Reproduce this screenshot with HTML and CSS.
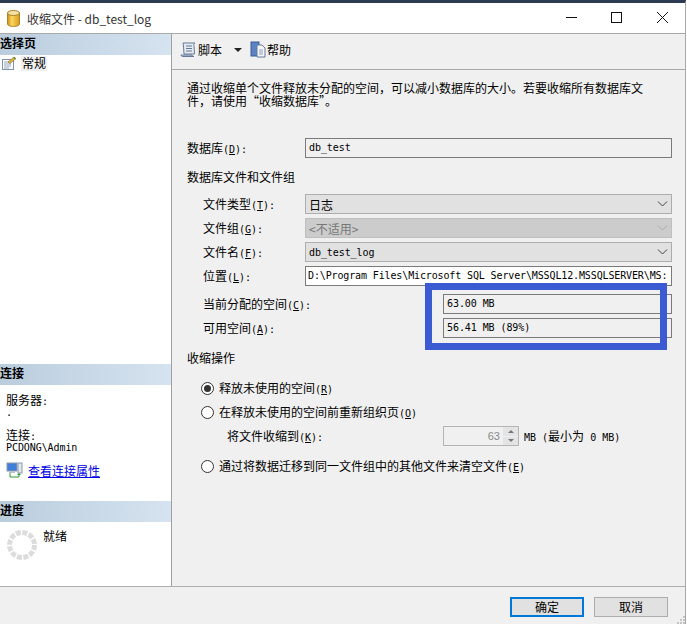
FILE: index.html
```html
<!DOCTYPE html>
<html lang="zh">
<head>
<meta charset="utf-8">
<title>收缩文件 - db_test_log</title>
<link rel="stylesheet" href="styles.css">
</head>
<body>
<div class="window">
  <header class="titlebar">
    <svg class="title-icon" width="13" height="17" viewBox="0 0 13 17"><defs><linearGradient id="cyl" x1="0" x2="1" y1="0" y2="0"><stop offset="0" stop-color="#c98f14"/><stop offset=".35" stop-color="#fbd75e"/><stop offset="1" stop-color="#d99c1c"/></linearGradient></defs><path d="M.5 3v11c0 1.4 2.7 2.5 6 2.5s6-1.100 6-2.500V3z" fill="url(#cyl)" stroke="#a9822b"/><ellipse cx="6.500" cy="3" rx="6" ry="2.500" fill="#f3e2a6" stroke="#a9822b"/></svg>
    <span class="title-text">收缩文件 - db_test_log</span>
    <div class="controls">
      <svg width="46" height="30" viewBox="0 0 46 30"><path d="M19 14.500h11" stroke="#111" fill="none"/></svg>
      <svg width="46" height="30" viewBox="0 0 46 30"><rect x="18.500" y="9.500" width="10" height="10" stroke="#111" fill="none"/></svg>
      <svg width="46" height="30" viewBox="0 0 46 30"><path d="M18 9l11 11M29 9L18 20" stroke="#111" fill="none"/></svg>
    </div>
  </header>

  <div class="main">
    <aside class="side">
      <section class="side-sec sec-pages">
        <h2 class="side-head">选择页</h2>
        <div class="page-item">
          <svg width="16" height="16" viewBox="0 0 16 16"><rect x="1.500" y="4.500" width="11" height="10" fill="#fff" stroke="#7f95ad"/><path d="M3 7h7M3 9h7M3 11h7M3 13h5" stroke="#8fa6bd"/><path d="M7 7l6-5 2 1.500-6 5z" fill="#e8b93a" stroke="#7d6a22" stroke-width=".6"/><path d="M13 2l2 1.500-1 .9-2-1.500z" fill="#5f9b3c"/></svg>
          <span class="page-name">常规</span>
        </div>
      </section>
      <section class="side-sec sec-conn">
        <h2 class="side-head">连接</h2>
        <div class="conn-body">
          <div class="conn-line">服务器<span class="k">:</span></div>
          <div class="conn-line mono">.</div>
          <div class="conn-line conn-gap">连接<span class="k">:</span></div>
          <div class="conn-line mono">PCDONG\Admin</div>
          <div class="conn-link">
            <svg width="17" height="16" viewBox="0 0 17 16"><rect x="1" y="1" width="10" height="8" fill="#3f7fd8" stroke="#8c9aae"/><rect x="3" y="9" width="6" height="2" fill="#b9c3cf"/><rect x="12" y="1" width="4" height="10" fill="#e2e7ee" stroke="#8c9aae"/><path d="M4 11v4h9v-3" stroke="#2f9a35" fill="none"/><path d="M11 13l2-2 2 2" fill="#2f9a35"/></svg>
            <a class="link" href="#">查看连接属性</a>
          </div>
        </div>
      </section>
      <section class="side-sec sec-prog">
        <h2 class="side-head">进度</h2>
        <div class="prog-body">
          <svg width="30" height="30" viewBox="0 0 30 30"><circle cx="15" cy="15" r="12.500" fill="none" stroke="#dcdcdc" stroke-width="5" stroke-dasharray="5 1.540"/></svg>
          <span class="prog-text">就绪</span>
        </div>
      </section>
    </aside>

    <div class="content">
      <div class="toolbar">
        <svg width="17" height="17" viewBox="0 0 17 17"><path d="M3 2h12c-1.500 1-1.500 2-1 3l.5 8H4L3.500 5C3.500 4 3 3 3 2z" fill="#e7ebf0" stroke="#63789a"/><path d="M1 14h11c.5 1 1 1.500 2 1.500H3C2 15.500 1 15 1 14z" fill="#c4cfdc" stroke="#63789a"/><path d="M6 5h6M6 7.500h6M6 10h6" stroke="#63789a"/></svg>
        <span class="tool-label">脚本</span>
        <span class="caret"></span>
        <svg class="help-icon" width="16" height="17" viewBox="0 0 16 17"><rect x="1" y="1" width="8" height="14" fill="#5d83c2" stroke="#3c5a94"/><path d="M7 4h5l3 3v9H7z" fill="#f4f6fa" stroke="#63789a"/><path d="M9 9h4M9 11h4M9 13h4" stroke="#8fa0b8"/></svg>
        <span class="tool-label">帮助</span>
      </div>

      <div class="form">
        <p class="intro">通过收缩单个文件释放未分配的空间，可以减小数据库的大小。若要收缩所有数据库文件，请使用“收缩数据库”。</p>

        <div class="row row-db">
          <span class="label">数据库<span class="k">(<u>D</u>):</span></span>
          <div class="field mono">db_test</div>
        </div>

        <div class="row row-heading">数据库文件和文件组</div>

        <div class="indent">
          <div class="row">
            <span class="label-in">文件类型<span class="k">(<u>T</u>):</span></span>
            <div class="combo"><span>日志</span><svg width="11" height="6" viewBox="0 0 11 6"><path d="M1 .5l4.500 4.500L10 .5" fill="none" stroke="#444"/></svg></div>
          </div>
          <div class="row">
            <span class="label-in">文件组<span class="k">(<u>G</u>):</span></span>
            <div class="combo combo-off"><span>&lt;不适用&gt;</span><svg width="11" height="6" viewBox="0 0 11 6"><path d="M1 .5l4.500 4.500L10 .5" fill="none" stroke="#aaa"/></svg></div>
          </div>
          <div class="row">
            <span class="label-in">文件名<span class="k">(<u>F</u>):</span></span>
            <div class="combo"><span class="mono">db_test_log</span><svg width="11" height="6" viewBox="0 0 11 6"><path d="M1 .5l4.500 4.500L10 .5" fill="none" stroke="#444"/></svg></div>
          </div>
          <div class="row">
            <span class="label-in">位置<span class="k">(<u>L</u>):</span></span>
            <div class="field field-path mono">D:\Program Files\Microsoft SQL Server\MSSQL12.MSSQLSERVER\MS:</div>
          </div>
          <div class="row row-space">
            <span class="label-wide">当前分配的空间<span class="k">(<u>C</u>):</span></span>
            <div class="field field-short mono">63.00 MB</div>
          </div>
          <div class="row">
            <span class="label-wide">可用空间<span class="k">(<u>A</u>):</span></span>
            <div class="field field-short mono">56.41 MB (89%)</div>
          </div>
        </div>

        <div class="row row-op">收缩操作</div>

        <div class="ops">
          <div class="row">
            <span class="radio radio-on"></span>
            <span>释放未使用的空间<span class="k">(<u>R</u>)</span></span>
          </div>
          <div class="row">
            <span class="radio"></span>
            <span>在释放未使用的空间前重新组织页<span class="k">(<u>O</u>)</span></span>
          </div>
          <div class="row row-shrink">
            <span class="label-shrink">将文件收缩到<span class="k">(<u>K</u>):</span></span>
            <div class="spin">
              <span class="spin-value">63</span>
              <span class="spin-btns">
                <span class="spin-btn"><i class="tri-up"></i></span>
                <span class="spin-btn"><i class="tri-down"></i></span>
              </span>
            </div>
            <span class="spin-note"><span class="k">MB (</span>最小为<span class="k"> 0 MB)</span></span>
          </div>
          <div class="row row-last">
            <span class="radio"></span>
            <span>通过将数据迁移到同一文件组中的其他文件来清空文件<span class="k">(<u>E</u>)</span></span>
          </div>
        </div>
      </div>
    </div>
  </div>

  <footer class="footer">
    <button class="btn btn-default" type="button">确定</button>
    <button class="btn" type="button">取消</button>
    <svg class="grip" width="8" height="8" viewBox="0 0 8 8"><path d="M6 0h2v2H6zM3 3h2v2H3zM6 3h2v2H6zM0 6h2v2H0zM3 6h2v2H3zM6 6h2v2H6z" fill="#c4c4c4"/></svg>
  </footer>

  <div class="highlight"></div>
</div>
</body>
</html>
```
FILE: styles.css
```css
* { box-sizing: border-box; }
html, body { margin: 0; padding: 0; background: #fff; }
body {
  width: 687px;
  height: 624px;
  overflow: hidden;
  font-family: "Noto Sans CJK SC", "Liberation Sans", sans-serif;
  font-size: 12px;
  line-height: 13px;
  color: #000;
}
.mono { font-family: "DejaVu Sans Mono", "Noto Sans CJK SC", monospace; font-size: 10px; letter-spacing: -.08px; }
.k { font-family: "DejaVu Sans Mono", monospace; font-size: 10px; }

.window {
  position: relative;
  width: 686px;
  height: 624px;
  display: flex;
  flex-direction: column;
  border-top: 3px solid #2d3b52;
  border-right: 1px solid #a8a8a8;
  background: #f0f0f0;
}

.titlebar {
  flex: none;
  height: 30px;
  background: #fff;
  display: flex;
  align-items: center;
  padding-left: 7px;
}
.title-text {
  margin-left: 7px;
  font-family: "Noto Sans CJK SC", "Open Sans", sans-serif;
  font-size: 12px;
  color: #333;
}
.controls { margin-left: auto; display: flex; height: 30px; }
.controls svg { display: block; }

.main {
  flex: none;
  height: 554px;
  display: flex;
  border-top: 1px solid #a9a9a9;
  border-bottom: 1px solid #aeaeae;
}

.side {
  flex: none;
  width: 172px;
  background: #fff;
  border-right: 1px solid #a0a0a0;
  display: flex;
  flex-direction: column;
}
.side-sec { flex: none; }
.sec-pages { height: 330px; }
.sec-conn { height: 137px; }
.sec-prog { height: 85px; }
.side-head {
  margin: 0;
  height: 21px;
  line-height: 18px;
  font-size: 12px;
  font-weight: 700;
  background: linear-gradient(90deg, #bacddd, #d6e3f0);
}
.page-item { display: flex; align-items: center; height: 16px; padding-left: 1px; }
.page-name { margin-left: 4px; padding: 0 1px; height: 15px; line-height: 14px; background: #f0f0f0; }

.conn-body { padding: 8px 0 0 6px; }
.conn-line { height: 13px; line-height: 13px; }
.conn-gap { margin-top: 9px; }
.conn-link { display: flex; align-items: center; height: 16px; margin-top: 8px; }
.link { margin-left: 5px; color: #0000e6; text-decoration: underline; }

.prog-body { display: flex; align-items: flex-start; padding: 8px 0 0 7px; }
.prog-text { margin-left: 6px; margin-top: -1px; }

.content { flex: 1; min-width: 0; display: flex; flex-direction: column; }
.toolbar {
  flex: none;
  height: 36px;
  border-bottom: 1px solid #a9a9a9;
  display: flex;
  align-items: center;
  padding: 0 0 4px 8px;
}
.tool-label { margin-left: 1px; }
.caret {
  margin-left: 12px;
  width: 0;
  height: 0;
  border-left: 4px solid transparent;
  border-right: 4px solid transparent;
  border-top: 4px solid #222;
}
.help-icon { margin-left: 8px; }

.form { padding: 11px 13px 0 15px; }
.intro { margin: 0; width: 458px; height: 26px; line-height: 13px; }

.row { display: flex; align-items: center; height: 20px; margin-top: 4px; }
.row-db { margin-top: 31px; }
.row-heading { margin-top: 8px; }
.indent { padding-left: 16px; margin-top: 8px; }
.indent > .row:first-child { margin-top: 0; }
.row-space { margin-top: 8px; }
.row-op { margin-top: 9px; }
.ops { padding-left: 14px; margin-top: 11px; }
.ops > .row:first-child { margin-top: 0; }
.row-shrink { padding-left: 26px; }
.row-last { margin-top: 10px; }

.label { flex: none; width: 118px; }
.label-in { flex: none; width: 102px; }
.label-wide { flex: none; width: 240px; }
.label-shrink { flex: none; width: 216px; }

.field {
  flex: 1;
  min-width: 0;
  height: 20px;
  line-height: 17px;
  border: 1px solid #7a7a7a;
  padding-left: 3px;
  background: #f0f0f0;
  white-space: nowrap;
}
.field-path { background: #fff; padding-left: 2px; letter-spacing: -.13px; }

.combo {
  flex: 1;
  min-width: 0;
  height: 20px;
  display: flex;
  align-items: center;
  justify-content: space-between;
  padding: 0 3px;
  background: #e1e1e1;
  border: 1px solid #adadad;
}
.combo-off { background: #ccc; border-color: #bfbfbf; color: #777; }

.radio {
  flex: none;
  width: 13px;
  height: 13px;
  margin-right: 5px;
  border: 1px solid #333;
  border-radius: 50%;
  background: #fff;
  position: relative;
}
.radio-on::after {
  content: "";
  position: absolute;
  left: 2px;
  top: 2px;
  width: 7px;
  height: 7px;
  border-radius: 50%;
  background: #333;
}

.spin {
  flex: none;
  width: 76px;
  height: 20px;
  border: 1px solid #b5b5b5;
  display: flex;
  justify-content: flex-end;
  align-items: center;
  background: #f0f0f0;
}
.spin-value { font-family: "Liberation Sans", sans-serif; font-size: 11px; color: #8a8a8a; margin-right: 3px; }
.spin-btns { width: 15px; height: 18px; display: flex; flex-direction: column; gap: 1px; }
.spin-btn { flex: 1; display: flex; align-items: center; justify-content: center; background: #e4e4e4; }
.tri-up { width: 0; height: 0; border: 3px solid transparent; border-top: 0; border-bottom: 3px solid #777; }
.tri-down { width: 0; height: 0; border: 3px solid transparent; border-bottom: 0; border-top: 3px solid #777; }
.spin-note { margin-left: 5px; white-space: nowrap; }

.footer {
  flex: 1;
  display: flex;
  align-items: flex-start;
  justify-content: flex-end;
  gap: 10px;
  padding: 10px 17px 0 0;
  position: relative;
}
.btn {
  width: 74px;
  height: 20px;
  padding: 0;
  font: inherit;
  line-height: 16px;
  color: #000;
  background: #e1e1e1;
  border: 1px solid #adadad;
  border-radius: 0;
}
.btn-default { border: 2px solid #0078d7; }
.grip { position: absolute; right: 0; bottom: 0; }

.highlight {
  position: absolute;
  left: 425px;
  top: 280px;
  width: 242px;
  height: 67px;
  border: 7px solid #3a5bd1;
  pointer-events: none;
}
```
